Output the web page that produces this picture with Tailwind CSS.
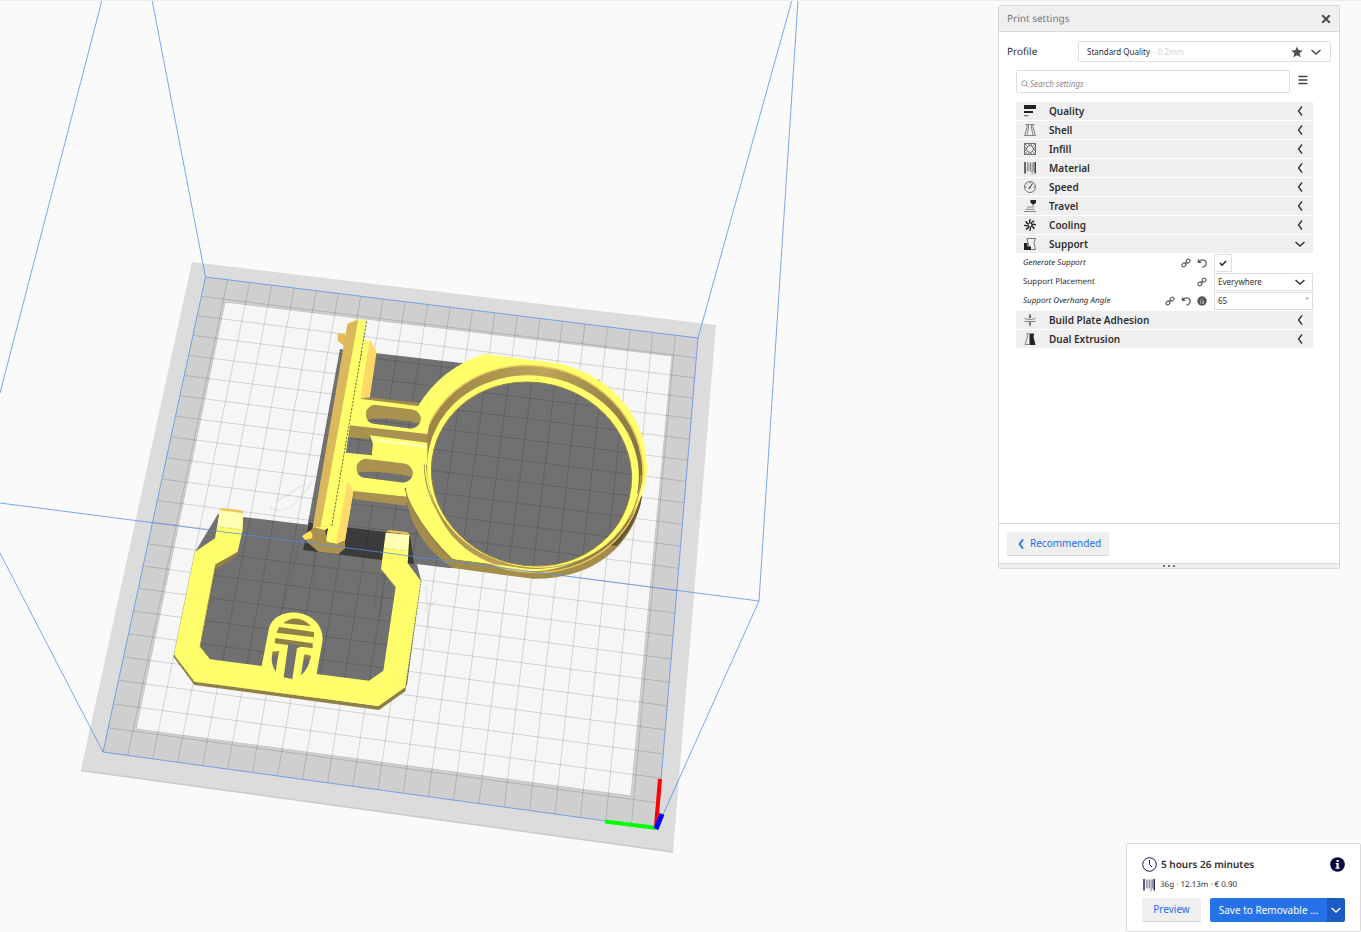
<!DOCTYPE html>
<html lang="en">
<head>
<meta charset="utf-8">
<meta name="viewport" content="width=device-width, initial-scale=1">
<title>Print settings</title>
<script src="https://cdn.jsdelivr.net/npm/@tailwindcss/browser@4"></script>
</head>
<body class="bg-[#fafafa] font-['Noto_Sans',sans-serif] text-[#2f2f2f] [text-rendering:geometricPrecision]">
<svg class="hidden" aria-hidden="true">
  <defs>
    <symbol id="left" viewBox="0 0 12 12"><path d="M8 1.500 4.500 6l3.500 4.500" fill="none" stroke="currentColor" stroke-width="1.300"/></symbol>
    <symbol id="down" viewBox="0 0 12 12"><path d="M1.500 4 6 8l4.500-4" fill="none" stroke="currentColor" stroke-width="1.400"/></symbol>
    <symbol id="link" viewBox="0 0 12 12"><g fill="none" stroke="currentColor" stroke-width="1.300"><rect x="1" y="6.300" width="5" height="4" rx="2" transform="rotate(-45 3.500 8.300)"/><rect x="6" y="1.700" width="5" height="4" rx="2" transform="rotate(-45 8.500 3.700)"/><path d="M4.500 7.500 7.500 4.500"/></g></symbol>
    <symbol id="undo" viewBox="0 0 12 12"><path d="M2.500 4.300C5 1 11 1.800 11 6.300 11 9 9 10.600 6.500 11" fill="none" stroke="currentColor" stroke-width="1.400"/><path d="M1 1v5h4.800z" fill="currentColor"/></symbol>
    <symbol id="spool" viewBox="0 0 12 14"><path d="M.3 1h1.400v11.500H.3zM10.500 1h1.400v11.500h-1.400z" fill="currentColor"/><path d="M3.300 1.500v9M4.900 1.500v9M6.500 1.500v9M8.100 1.500v12M9.400 1.500v9" stroke="currentColor" stroke-opacity=".65" stroke-width=".8"/></symbol>
  </defs>
</svg>
<main class="relative flex min-h-screen flex-col items-end justify-between overflow-hidden border-t border-[#ebebeb]">
  <svg class="absolute inset-0 -top-px h-screen w-full" viewBox="0 0 1361 932" preserveAspectRatio="xMinYMin slice" role="img" aria-label="Build plate with two models">
    <defs>
      <clipPath id="holes">
        <ellipse cx="531.500" cy="474" rx="100.600" ry="90.800" transform="rotate(14 531.500 474)"/>
        <path d="M367 421Q380 415 418 422L413 428 373 424ZM357 474Q380 469 411 476L402 482 365 478ZM347 437.500 370 439 373 443 371.500 455.500 345 452.500Z"/>
      </clipPath>
      <linearGradient id="wall" x1="0" x2="1"><stop offset="0" stop-color="#9b8447"/><stop offset=".45" stop-color="#bda45a"/><stop offset="1" stop-color="#80703f"/></linearGradient>
    </defs>
    <path d="M192 262 716 325 673 852 81 770Z" fill="#dcdcdc"/>
    <path d="M81 770.500 673 852" stroke="#c9c9c9" stroke-width="1.500"/>
    <path d="M205.500 277 698 338 657 828 103 752Z" fill="#cfcfcf"/>
    <path d="M225 302 672 356 631 796 136 729Z" fill="#f6f6f6" stroke="#c6c6c6"/>
    <g fill="#717171">
      <path d="M340 349 470 364 600 380 560 570 449 568 303 550Z"/>
      <path d="M218 514 410 537 421 580 407 685 378 705 195 682 174 655 195 552Z"/>
    </g>
    <path d="M309 522.500 385 532 410 535 414 564 382 560 303 550Z" fill="#3b3b3b"/>
    <g fill="none" stroke="#000" stroke-opacity=".05" stroke-width="2"><path d="M270 508c18 8 28-6 42-26M276 500c12-2 18-12 30-16M300 540 282 610M314 550v38M378 575 374 610M385 560 380 615M426 585 430 645M437 600 424 610M440 465q16 0 8 40"/></g>
    <path id="grid" fill="none" stroke="#000" stroke-opacity=".14"/>
    <!-- ring holder -->
    <path d="M405 495 L411 517Q424 550 453 568L500 574.500 533 578.700C588 580 634 550 642 495L600 520 440 540Z" fill="#a38c4c"/>
    <path d="M642 497Q638 523 617 546L608 545 640 495Z" fill="#675934"/>
    <path d="M418 406Q442 367 485 354L556 363C608 373 647 415 647 467C646 521 590 569 533 569L453 559Q422 530 405 492L420 450Z" fill="#ffff6b"/>
    <ellipse cx="531.500" cy="469" rx="112" ry="103" transform="rotate(14 531.500 469)" fill="url(#wall)" stroke="#e9c85c" stroke-width="1.500"/>
    <path d="M425 450Q427 530 480 558T590 555L640 490 647 467C646 521 590 569 533 569L453 559Q422 530 412 492L415 450Z" fill="#ffff6b"/>
    <path d="M424 462C424 515 470 565 530 568S640 530 641 475" fill="none" stroke="#b79b50" stroke-width="1.300"/>
    <ellipse cx="533" cy="471.500" rx="106.500" ry="95.500" transform="rotate(14 533 471.500)" fill="#ffff6b"/>
    <ellipse cx="531.500" cy="474" rx="100.600" ry="91.500" transform="rotate(14 531.500 474)" fill="#717171" stroke="#93804a"/>
    <!-- arms and rail -->
    <g transform="translate(290 310) scale(.33333)">
      <path d="M143 70 165 72V110L143 92Z" fill="#e6bc55"/>
      <path d="M172 42 205 30 110 655 67 658Z" fill="#dcb85c"/>
      <path d="M225 88 240 90 213 268 185 268Z" fill="#ffff6b"/>
      <path d="M240 90 260 125 239 265 211 268Z" fill="#ffd966"/>
      <path d="M211 266 235 262 388 279 383 290Z" fill="#a38c4c"/>
      <path d="M185 263 211 266 383 288 425 300 412 374 160 346Z" fill="#ffff6b"/>
      <path d="M172 345 412 372V402L240 378 236 388 168 382Z" fill="#a9924f"/>
      <path d="M240 376 412 398 412 465 245 438 248 400Z" fill="#ffff6b"/>
      <path d="M250 388 410 410" stroke="#ffffb0" stroke-width="9"/>
      <path d="M168 382 236 387 248 400 245 437 160 428Z" fill="#717171"/>
      <path d="M155 427 245 436 400 458 405 520 345 535 350 561 190 545 165 690 140 702 106 697 125 600Z" fill="#ffff6b"/>
      <path d="M205 28 230 32 180 345 168 425 122 655 92 650Z" fill="#ffff6b"/>
      <path d="M205 28 172 42" stroke="#e9c85c" stroke-width="2"/>
      <path d="M230 34 125 650" stroke="#55502c" stroke-width="2.500" stroke-dasharray="7 4"/>
      <path d="M172 512 190 543 165 692 138 702Z" fill="#ffdc69"/>
      <path d="M190 543 350 560V587L190 567Z" fill="#a9924f"/>
      <path d="M256 313 364 327M228 475 340 489" stroke="#a9924f" stroke-width="57" stroke-linecap="round"/>
      <path d="M231 329Q280 318 388 340 378 357 355 355L255 341Q240 341 231 329ZM202 489Q245 478 366 500 352 519 335 517L228 503Q210 503 202 489Z" fill="#717171"/>
      <path d="M345 535Q355 590 420 675T495 747" fill="none" stroke="#927e45" stroke-width="3"/>
      <path d="M62 660 75 652 105 650 110 695 140 702 165 692V715L145 733 85 725 45 690Z" fill="#a9924f"/>
      <path d="M36 678 60 662 67 672 67 684 45 690Z" fill="#ffe464"/>
      <path d="M72 652 122 650 104 660Z" fill="#ffff6b"/>
    </g>
    <!-- hinged frame -->
    <g transform="translate(165 500) scale(.33333)">
      <path d="M27 465 88 545 640 618 722 560V573L642 630 88 555 25 470ZM218 150V165L155 207 148 192Z" fill="#908046"/>
      <path fill="#ffff6b" d="M165 30 235 38 233 90 218 155 152 193 105 440 135 478 290 498 310 395C320 310 475 320 473 420L455 522 612 542 655 512 692 262 648 208 662 98 733 105 728 190 768 243 722 560 640 618 88 545 27 465 90 155 150 115Z"/>
      <path d="M152 193 105 440M648 208 692 262" stroke="#a9924f" stroke-width="3"/>
      <path d="M768 243 722 560M27 465 88 545" stroke="#625b34" stroke-width="2" stroke-dasharray="5 4"/>
      <path d="M164 32 235 40 230 88 158 80ZM664 98 733 105 728 153 657 145Z" fill="#ffffb4"/>
      <path d="M163 32Q165 24 175 25L228 31Q236 34 236 42L228 38 170 31ZM664 98Q666 90 674 90L727 97Q734 99 734 108L727 103 670 96Z" fill="#edc657"/>
      <path d="M158 80 230 89M657 145 728 153" stroke="#8c8250" stroke-width="1.500" stroke-dasharray="3 5"/>
      <path d="M354 370Q395 338 438 378ZM342 381 447 396V412L335 398ZM331 414 443 430V445L329 430ZM322 455 343 453 340 465 321 467ZM419 463 438 467 436 478 416 475Z" fill="#908046"/>
      <path d="M370 431 412 438 396 445 382 537 356 532ZM321 466 340 464 332 515Q317 492 321 466ZM416 474 435 477Q431 505 408 526Z" fill="#717171"/>
    </g>
    <use href="#grid" clip-path="url(#holes)"/>
    <path d="M102 0 0 393M152 0 205.500 277 698 338 792 0M798 0 759 601 0 503M759 601 657 828 103 752 0 553M103 752 205.500 277M698 338 657 828" fill="none" stroke="#5b92e6" stroke-opacity=".8"/>
    <path d="M660 779 656 826" stroke="red" stroke-width="4"/>
    <path d="M605 821.500 657 828" stroke="#0f0" stroke-width="4"/>
    <path d="M656 829 662 814" stroke="#00f" stroke-width="5"/>
  </svg>

  <aside class="relative mt-1 mr-[21px] flex min-h-[564px] w-[342px] flex-col rounded-xs border border-[#dadada] bg-white text-[10px]">
    <header class="flex h-[26px] shrink-0 items-center justify-between border-b border-[#dadada] bg-[#efefef] px-2">
      <h1 class="text-[10px] text-[#777]">Print settings</h1>
      <button class="size-[10px]" aria-label="Close"><svg class="size-full" viewBox="0 0 10 10"><path d="m1.200 1.200 7.600 7.600m0-7.600-7.600 7.600" stroke="#4b4b4b" stroke-width="2"/></svg></button>
    </header>
    <div class="flex items-center justify-between px-2 pt-[9px]">
      <span id="profile">Profile</span>
      <button aria-labelledby="profile" class="flex h-[21px] w-[253px] items-center rounded-xs border border-[#dedede] px-2 text-[8px]">
        <span>Standard Quality</span><span class="ml-[3px] text-[#d4d4d4]">- 0.2mm</span>
        <svg class="ml-auto size-3" viewBox="0 0 12 12"><path d="m6 .5 1.600 3.600 4 .5-2.900 2.700.8 4L6 9.300l-3.500 2 .8-4L.4 4.600l4-.5z" fill="#555"/></svg>
        <svg class="ml-[7px] size-3 text-[#444]"><use href="#down"/></svg>
      </button>
    </div>
    <div class="mt-2 flex items-center pl-[17px]">
      <label class="flex h-[23px] w-[274px] items-center rounded-xs border border-[#dedede] pl-1">
        <svg class="mt-1 size-2 shrink-0" viewBox="0 0 8 8" fill="none" stroke="#888" stroke-width=".8"><circle cx="3.300" cy="3.300" r="2.600"/><path d="m5.200 5.200 2.400 2.400"/></svg>
        <input type="text" aria-label="Search settings" placeholder="Search settings" class="mt-1 ml-px w-full text-[8px] italic outline-none placeholder:text-[#8b8b8b]">
      </label>
      <button aria-label="Setting visibility" class="mb-1 ml-2 size-[10px]"><svg class="size-full" viewBox="0 0 10 10"><path d="M.5 1.500h9M.5 5h9M.5 8.500h9" stroke="#444" stroke-width="1.300"/></svg></button>
    </div>
    <div class="mt-[9px] mr-[26px] ml-[17px] flex flex-col gap-px font-semibold">
      <button class="flex h-[18px] items-center bg-[#efefef] pr-[7px] pl-2"><svg class="mr-[13px] size-3" viewBox="0 0 12 12" fill="#222"><path d="M0 0h12v4H0zM0 6h9v2H0z"/><path d="M0 10h4.500v1.300H0z" fill="#777"/></svg>Quality<svg class="ml-auto size-3"><use href="#left"/></svg></button>
      <button class="flex h-[18px] items-center bg-[#efefef] pr-[7px] pl-2"><svg class="mr-[13px] size-3" viewBox="0 0 12 12" fill="none" stroke="#777"><path d="M1.500.5h9M3 .5v3L.6 11.500h10.800L9 3.500v-3M4.500 1v3L3 11M7.500 1v3L9 11" stroke-width=".9"/></svg>Shell<svg class="ml-auto size-3"><use href="#left"/></svg></button>
      <button class="flex h-[18px] items-center bg-[#efefef] pr-[7px] pl-2"><svg class="mr-[13px] size-3" viewBox="0 0 12 12" fill="none" stroke="#555" stroke-width=".8"><path d="M.5.500h11v11H.5zM3.500.5l2.500 2 2.500-2M.5 3.500l2 2.500-2 2.500M11.500 3.500l-2 2.500 2 2.500M3.500 11.500l2.500-2 2.500 2M.5.500 3.500 3.500M11.500.5l-3 3M.5 11.500l3-3M11.500 11.500l-3-3M3.500 3.500 6 2.500l2.500 1L9.500 6l-1 2.500L6 9.500l-2.500-1L2.500 6z"/></svg>Infill<svg class="ml-auto size-3"><use href="#left"/></svg></button>
      <button class="flex h-[18px] items-center bg-[#efefef] pr-[7px] pl-2"><svg class="mr-[13px] h-[14px] w-3"><use href="#spool"/></svg>Material<svg class="ml-auto size-3"><use href="#left"/></svg></button>
      <button class="flex h-[18px] items-center bg-[#efefef] pr-[7px] pl-2"><svg class="mr-[13px] size-3" viewBox="0 0 12 12" fill="none" stroke="#555" stroke-width=".8"><circle cx="6" cy="6" r="5.500"/><path d="M6 1v1.500M1 6h1.500M9.500 6H11M2.500 2.500l1 1"/><path d="m5.500 7 3-4.500" stroke-width="1.200"/><circle cx="5.500" cy="7" r=".8"/></svg>Speed<svg class="ml-auto size-3"><use href="#left"/></svg></button>
      <button class="flex h-[18px] items-center bg-[#efefef] pr-[7px] pl-2"><svg class="mr-[13px] size-3" viewBox="0 0 12 12"><path d="M6.500 0H12v2.500L10 4.500H8.500L6.500 2.500z" fill="#222"/><path d="M9.300 5v2M3 7h6.300M1.500 9.300h9M0 11.500h12" stroke="#888"/></svg>Travel<svg class="ml-auto size-3"><use href="#left"/></svg></button>
      <button class="flex h-[18px] items-center bg-[#efefef] pr-[7px] pl-2"><svg class="mr-[13px] size-3" viewBox="0 0 12 12" stroke="#222" stroke-width="1.300" fill="none"><path d="M6 4.500Q5 2 6.500 0M7 5Q7.500 2.500 10.200 2M7.500 6Q9.500 4.500 12 6M7 7q3 .5 3 3M6 7.500Q7 10 5.500 12M5 7q-.5 2.500-3 3M4.500 6Q2.500 7.500 0 6M5 5Q2 4.500 2 2"/></svg>Cooling<svg class="ml-auto size-3"><use href="#left"/></svg></button>
      <button aria-expanded="true" class="flex h-[18px] items-center bg-[#efefef] pr-[7px] pl-2"><svg class="mr-[13px] size-3" viewBox="0 0 12 12"><path d="M3 .5h8.500L10 4.500l1.500 7H6L4 5z" fill="none" stroke="#555" stroke-width=".8"/><path d="M0 5h3.500v3.500H7V12H0z" fill="#222"/></svg>Support<svg class="ml-auto size-3"><use href="#down"/></svg></button>
      <div class="flex h-[18px] items-center pl-[7px] text-[8px] font-normal"><label for="gen" class="mr-auto italic">Generate Support</label><svg class="size-[10px] text-[#555]"><use href="#link"/></svg><svg class="mr-[7px] ml-1.5 size-[10px] text-[#555]"><use href="#undo"/></svg>
        <span class="flex w-[99px]"><span class="grid size-[18px] place-items-center border border-[#dedede]"><input id="gen" type="checkbox" checked class="col-start-1 row-start-1 size-full appearance-none"><svg class="pointer-events-none col-start-1 row-start-1 size-2" viewBox="0 0 8 8"><path d="m1 4 2 2.200L7 2" fill="none" stroke="#222" stroke-width="1.500"/></svg></span></span>
      </div>
      <div class="flex h-[18px] items-center pl-[7px] text-[8px] font-normal"><label for="place" class="mr-auto">Support Placement</label><svg class="mr-[7px] size-[10px] text-[#555]"><use href="#link"/></svg>
        <span class="grid h-[18px] w-[99px] items-center border border-[#dedede]"><select id="place" class="col-start-1 row-start-1 w-full appearance-none pl-[3px]"><option>Everywhere</option><option>Touching Buildplate</option></select><svg class="pointer-events-none col-start-1 row-start-1 mr-[6px] size-3 justify-self-end"><use href="#down"/></svg></span>
      </div>
      <div class="flex h-[18px] items-center pl-[7px] text-[8px] font-normal"><label for="angle" class="mr-auto italic">Support Overhang Angle</label><svg class="size-[10px] text-[#555]"><use href="#link"/></svg><svg class="mx-1.5 size-[10px] text-[#555]"><use href="#undo"/></svg><svg class="mr-[7px] size-[10px]" viewBox="0 0 10 10"><circle cx="5" cy="5" r="4.700" fill="#555"/><path d="M3.500 8V4.500l2-2M5.500 8V5l1-.5V8" fill="none" stroke="#bbb" stroke-width=".7"/></svg>
        <span class="flex h-[18px] w-[99px] items-center border border-[#dedede] px-[3px]"><input id="angle" type="text" value="65" class="w-full min-w-0 outline-none"><span class="text-[#888]">°</span></span>
      </div>
      <button class="flex h-[18px] items-center bg-[#efefef] pr-[7px] pl-2"><svg class="mr-[13px] size-3" viewBox="0 0 12 12"><path d="M.5 4.500Q6 7 11.500 4.500M.5 7.500h11" fill="none" stroke="#777" stroke-width=".9"/><path d="M6 0v3M6 9v3" stroke="#333"/><path d="M4.500 2.500h3L6 4.500zM4.500 9.500h3L6 8z" fill="#333"/></svg>Build Plate Adhesion<svg class="ml-auto size-3"><use href="#left"/></svg></button>
      <button class="flex h-[18px] items-center bg-[#efefef] pr-[7px] pl-2"><svg class="mr-[13px] size-3" viewBox="0 0 12 12"><path d="M5 .5H3L3.500 4 1 11.500h4" fill="none" stroke="#777" stroke-width=".9"/><path d="M5.500.500H10L9.500 4l2 8h-6z" fill="#222"/></svg>Dual Extrusion<svg class="ml-auto size-3"><use href="#left"/></svg></button>
    </div>
    <footer class="mt-auto">
      <div class="border-t border-[#dadada] px-2 pt-2 pb-[7px]">
        <button class="flex h-6 w-[102px] items-center rounded-xs border-b border-[#d4d4d4] bg-[#efefef] pl-2 text-[#196ef0]"><svg class="mr-[3px] size-3" viewBox="0 0 12 12"><path d="M8 1.500 4.500 6l3.500 4.500" fill="none" stroke="currentColor" stroke-width="1.700"/></svg>Recommended</button>
      </div>
      <div class="flex h-[5px] items-center justify-center gap-[3px] border-t border-[#dadada] bg-[#efefef]"><i class="size-[2px] rounded-full bg-[#444]"></i><i class="size-[2px] rounded-full bg-[#444]"></i><i class="size-[2px] rounded-full bg-[#444]"></i></div>
    </footer>
  </aside>

  <section class="relative flex h-[89px] w-[235px] flex-col rounded-xs border border-[#dadada] bg-white px-[15px] pt-3" aria-label="Print estimate">
    <div class="flex h-4 items-center text-[10px] font-semibold">
      <svg class="mr-1 size-[15px]" viewBox="0 0 15 15" fill="none" stroke="#191952"><circle cx="7.500" cy="7.500" r="6.800"/><path d="M7.500 3v4.500l2.500 2.500"/></svg>5 hours 26 minutes
      <button aria-label="Details" class="ml-auto size-[15px]"><svg class="size-full" viewBox="0 0 15 15"><circle cx="7.500" cy="7.500" r="7.300" fill="#08073f"/><path d="M6.500 3h2.200v2H6.500zM5.700 6h3v4.600h1v1.200H5.500v-1.200h1V7.200h-.8z" fill="#fff"/></svg></button>
    </div>
    <div class="mt-[6px] flex h-[14px] items-center text-[8px]"><svg class="mr-[5px] ml-px h-[14px] w-3 text-[#191952]"><use href="#spool"/></svg>36g · 12.13m · € 0.90</div>
    <div class="mt-[6px] flex justify-between text-[10px]">
      <button class="h-6 w-[59px] rounded-xs border-b border-[#d4d4d4] bg-[#efefef] text-[#196ef0]">Preview</button>
      <div class="flex w-[135px]"><button class="h-6 flex-1 rounded-l-xs bg-[#2672e8] text-white">Save to Removable ...</button><button aria-label="More outputs" class="grid h-6 w-[18px] place-items-center rounded-r-xs bg-[#1a5bc4] text-white"><svg class="size-3"><use href="#down"/></svg></button></div>
    </div>
  </section>
</main>
<script>
// Projects the 22 x 22 cell build plate onto its corners in the camera view.
const [A, B, C, D] = [[205.5, 277], [698, 338], [657, 828], [103, 752]];
const dx1 = B[0] - C[0], dx2 = D[0] - C[0], dx3 = A[0] - B[0] + C[0] - D[0];
const dy1 = B[1] - C[1], dy2 = D[1] - C[1], dy3 = A[1] - B[1] + C[1] - D[1];
const det = dx1 * dy2 - dx2 * dy1;
const g = (dx3 * dy2 - dx2 * dy3) / det, h = (dx1 * dy3 - dx3 * dy1) / det;
const at = (u, v) => [0, 1].map(i => (((B[i] - A[i] + g * B[i]) * u + (D[i] - A[i] + h * D[i]) * v + A[i]) / (g * u + h * v + 1)).toFixed(1)).join(" ");
let d = "";
for (let i = 1; i < 22; i++) {
  const t = i / 22;
  d += `M${at(t, 0)}L${at(t, 1)}M${at(0, t)}L${at(1, t)}`;
}
document.getElementById("grid").setAttribute("d", d);
</script>
</body>
</html>
